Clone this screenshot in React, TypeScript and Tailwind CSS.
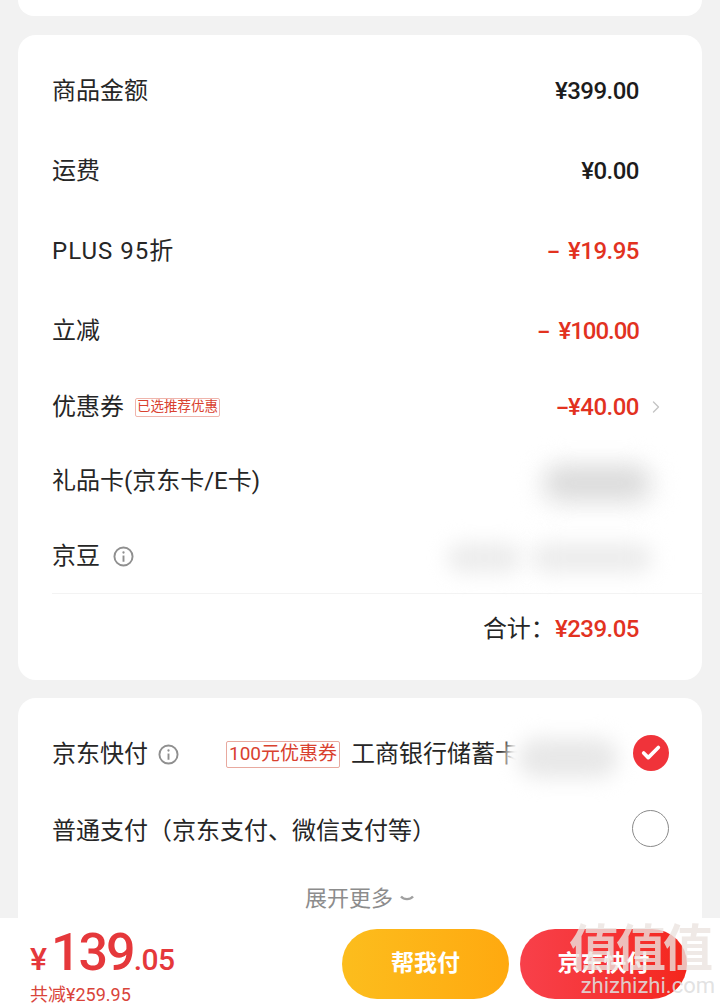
import { ChevronRight, Check } from "lucide-react";
import type { ReactNode } from "react";

const cjk = "font-['Roboto','Noto_Sans_CJK_SC',sans-serif]";

function InfoIcon({ className }: { className?: string }) {
  return (
    <svg viewBox="0 0 22 22" className={className} fill="none" stroke="#8f8f8f">
      <circle cx="11" cy="11" r="9.5" strokeWidth="2" />
      <circle cx="11" cy="6.8" r="1.2" fill="#8f8f8f" stroke="none" />
      <path d="M11 10v6.5" strokeWidth="2" />
    </svg>
  );
}

function Row({ label, className, children }: { label: ReactNode; className: string; children?: ReactNode }) {
  return (
    <div className={`flex items-center justify-between ${className}`}>
      <div className="flex items-center text-[24px] leading-none text-[#262626]">{label}</div>
      {children}
    </div>
  );
}

function Amount({ children, red }: { children: ReactNode; red?: boolean }) {
  return (
    <span className={`text-[24px] leading-none font-medium tracking-[-0.5px] ${red ? "text-[#e2321f]" : "text-[#1c1c1c]"}`}>
      {children}
    </span>
  );
}

export default function App() {
  return (
    <div className={`relative h-[1007px] w-[720px] overflow-hidden bg-[#f2f2f2] ${cjk}`}>
      <div className="mx-[18px] h-4 rounded-b-[18px] bg-white" />

      <section className="relative mx-[18px] mt-[19px] h-[645px] rounded-[18px] bg-white pt-[18px] pl-[34px]">
        <div className="pr-[63px]">
          <Row label="商品金额" className="h-20 pb-1">
            <Amount>¥399.00</Amount>
          </Row>
          <Row label="运费" className="h-20 pb-1">
            <Amount>¥0.00</Amount>
          </Row>
          <Row label={<span className="tracking-[1px]">PLUS 95折</span>} className="h-20 pb-1">
            <Amount red>
              <span className="mr-[9px] text-[20px] font-bold">–</span>¥19.95
            </Amount>
          </Row>
          <Row label="立减" className="h-20 pb-1">
            <Amount red>
              <span className="mr-[9px] text-[20px] font-bold">–</span>
              <span className="tracking-[-1px]">¥100.00</span>
            </Amount>
          </Row>
        </div>
        <Row
          className="-mt-[2px] h-[72px] pr-[36px]"
          label={
            <>
              优惠券
              <span className="ml-[11px] flex h-[19px] w-[85px] items-center justify-center rounded-[2px] border border-[#efb5ac] text-[13.5px] whitespace-nowrap text-[#d9412f]">
                已选推荐优惠
              </span>
            </>
          }
        >
          <div className="flex items-center">
            <Amount red>
              <span className="text-[20px] font-bold">–</span>¥40.00
            </Amount>
            <ChevronRight className="ml-[7px] h-[24px] w-[20px] text-[#c4c4c4]" strokeWidth={1.6} />
          </div>
        </Row>
        <Row label="礼品卡(京东卡/E卡)" className="h-[76px]" />
        <Row
          className="h-[74px]"
          label={
            <>
              京豆
              <InfoIcon className="ml-[13px] h-[21px] w-[21px]" />
            </>
          }
        />
        <div className="border-t border-[#f3f3f3]">
          <div className="flex h-[70px] items-center justify-end pr-[63px]">
            <span className="text-[24px] leading-none text-[#262626]">{"合计\uFF1A"}</span>
            <Amount red>¥239.05</Amount>
          </div>
        </div>
        <div className="absolute top-[422px] right-[40px] h-[56px] w-[130px] rounded-full bg-[#f7f7f7] blur-[10px]" />
        <div className="absolute top-[432px] right-[55px] h-[32px] w-[100px] rounded-full bg-[#dcdcdc] blur-[10px]" />
        <div className="absolute top-[508px] right-[50px] h-[30px] w-[120px] rounded-full bg-[#ececec] blur-[10px]" />
        <div className="absolute top-[508px] right-[180px] h-[30px] w-[75px] rounded-full bg-[#ececec] blur-[10px]" />
      </section>

      <section className="relative mx-[18px] mt-[18px] h-[240px] rounded-t-[18px] bg-white pt-[18px] pl-[34px]">
        <div className="flex h-[76px] items-center">
          <span className="text-[24px] leading-none text-[#262626]">京东快付</span>
          <InfoIcon className="ml-[10px] h-[21px] w-[21px]" />
          <span className="ml-[47px] flex h-[27px] w-[114px] items-center justify-center rounded-[2px] border border-[#e8a99f] text-[19px] whitespace-nowrap text-[#d9412f]">
            100元优惠券
          </span>
          <span className="ml-[11px] text-[24px] leading-none whitespace-nowrap text-[#262626]">工商银行储蓄卡</span>
        </div>
        <div className="flex h-[78px] items-center">
          <span className="text-[24px] leading-none text-[#262626]">{"普通支付\uFF08京东支付、微信支付等\uFF09"}</span>
        </div>
        <div className="flex h-[58px] items-center justify-center pr-[34px] text-[22px] leading-none text-[#8c8c8c]">
          展开更多
          <svg viewBox="0 0 16 8" className="ml-[6px] h-[8px] w-[16px]" fill="none" stroke="#a0a0a0" strokeWidth="2.4">
            <path d="M2 1.5c3 3.5 9 3.5 12 0" />
          </svg>
        </div>
        <div className="absolute top-[28px] left-[488px] h-[64px] w-[124px] rounded-full bg-white blur-[5px]" />
        <div className="absolute top-[40px] left-[500px] h-[40px] w-[100px] rounded-full bg-[#e8e8e8] blur-[10px]" />
        <div className="absolute top-[37px] right-[33px] flex h-[36px] w-[36px] items-center justify-center rounded-full bg-[#f0333a]">
          <Check className="h-[22px] w-[22px] text-white" strokeWidth={4} />
        </div>
        <div className="absolute top-[112px] right-[33px] h-[37px] w-[37px] rounded-full border border-[#8a8a8a]" />
      </section>

      <footer className="absolute inset-x-0 bottom-0 flex h-[89px] items-start justify-between bg-white pl-[30px]">
        <div className="pt-[5px]">
          <div className="flex h-[60px] items-baseline font-medium text-[#e5383b]">
            <span className="text-[32px] leading-none">¥</span>
            <span className="ml-[4px] text-[52px] leading-[60px] tracking-[-2px]">139</span>
            <span className="text-[30px] leading-none tracking-[-0.5px]">.05</span>
          </div>
          <div className="text-[18px] leading-[24px] text-[#d9443a]">共减¥259.95</div>
        </div>
        <div className="mt-[11px] mr-[33px] flex gap-[11px]">
          <div className="flex h-[70px] w-[167px] items-center justify-center rounded-full bg-gradient-to-r from-[#fcbd1d] to-[#ffa90f] text-[23px] font-bold text-white">
            帮我付
          </div>
          <div className="flex h-[70px] w-[167px] items-center justify-center rounded-full bg-gradient-to-r from-[#f8404a] to-[#f4261b] text-[23px] font-bold text-white">
            京东快付
          </div>
        </div>
      </footer>

      <div className="absolute right-[10px] bottom-[9px] flex flex-col items-end leading-none">
        <span className="mb-[-3px] text-[50px] leading-[56px] font-bold tracking-[-3px] whitespace-nowrap text-[#ebe3e0]/80">值值值</span>
        <span className="mr-[-5px] text-[22px] leading-[24px] text-[#dedede]/90">zhizhizhi.com</span>
      </div>
    </div>
  );
}
